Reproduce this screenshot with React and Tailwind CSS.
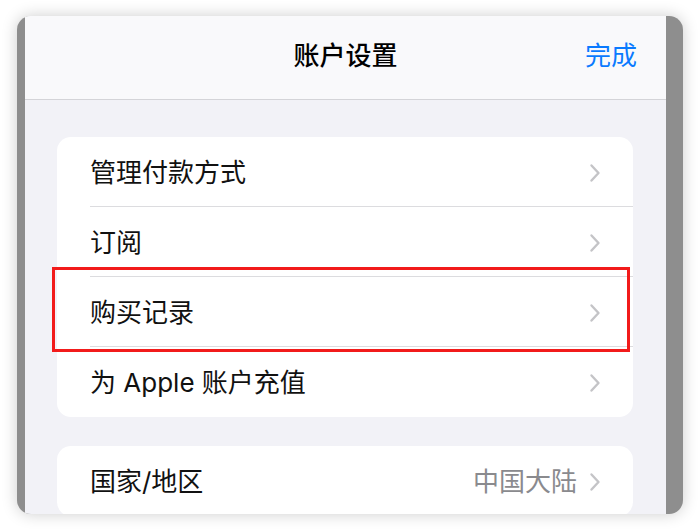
import React from 'react';

const font = { fontFamily: 'Inter, "Noto Sans CJK SC", sans-serif' };

function Chevron() {
    return (
        <svg width="12" height="20" viewBox="0 0 12 20" fill="none" className="shrink-0">
            <path d="M2.5 2.5 L9.5 10 L2.5 17.5" stroke="#c4c4c7" strokeWidth="2.4" strokeLinecap="round" strokeLinejoin="round" />
        </svg>
    );
}

function Row({ label, value, last }) {
    return (
        <div className="h-[70px] pl-[33px] flex">
            <div className={`flex-1 flex items-center pt-[2px] pr-[32px] ${last ? '' : 'border-b border-[#dcdcdf]'}`}>
                <span className="flex-1 text-[26px] text-[#111] leading-none">{label}</span>
                {value && <span className="text-[26px] text-[#8a8a8e] leading-none mr-3">{value}</span>}
                <Chevron />
            </div>
        </div>
    );
}

export default function App() {
    return (
        <div className="w-[700px] h-[530px] bg-white pt-4 pl-[17px]" style={font}>
            <div className="w-[666px] h-[498px] rounded-[14px] bg-[#8e8e8e] overflow-hidden pl-2 pr-[17px] shadow-[0_0_16px_rgba(0,0,0,0.2)]">
                <div className="h-full bg-[#f2f2f7] flex flex-col">
                    <div className="h-[84px] shrink-0 bg-[#f9f9fb] border-b border-[#d4d4d8] grid grid-cols-[1fr_auto_1fr] items-center pb-1">
                        <div />
                        <div className="text-[26px] font-medium text-black leading-none">账户设置</div>
                        <div className="justify-self-end pr-[29px] text-[26px] text-[#0a7aff] leading-none">完成</div>
                    </div>
                    <div className="pt-[37px] pl-8 pr-[33px] flex flex-col gap-[29px]">
                        <div className="relative bg-white rounded-[14px]">
                            <Row label="管理付款方式" />
                            <Row label="订阅" />
                            <Row label="购买记录" />
                            <Row label="为 Apple 账户充值" last />
                            <div className="absolute left-[-5px] top-[130px] w-[578px] h-[85px] border-[3px] border-[#f21b1b]" />
                        </div>
                        <div className="bg-white rounded-[14px]">
                            <Row label="国家/地区" value="中国大陆" last />
                        </div>
                    </div>
                </div>
            </div>
        </div>
    );
}
